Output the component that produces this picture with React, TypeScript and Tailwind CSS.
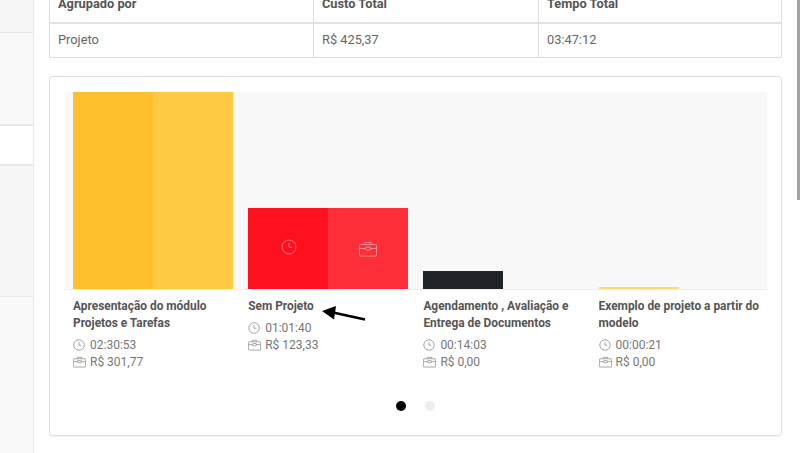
import React from 'react'

const ClockIcon = ({ className }: { className?: string }) => (
  <svg viewBox="0 0 16 16" fill="none" stroke="currentColor" strokeWidth="1" className={className}>
    <circle cx="8" cy="8" r="7" />
    <path d="M8 4v4.3h3" />
  </svg>
)

const BagIcon = ({ className }: { className?: string }) => (
  <svg viewBox="0 0 18 16" fill="none" stroke="currentColor" strokeWidth="1" className={className}>
    <rect x="0.5" y="3.5" width="17" height="11.5" rx="1" />
    <path d="M6 3.5V1.5h6v2M0.5 7.5h6M11.5 7.5h6" />
    <rect x="6.5" y="6" width="5" height="3" rx="0.5" />
  </svg>
)

const projects = [
  { title: ['Apresentação do módulo', 'Projetos e Tarefas'], time: '02:30:53', cost: 'R$ 301,77', height: 'h-[197px]', left: 'bg-[#ffc02e]', right: 'bg-[#ffca43]' },
  { title: ['Sem Projeto'], time: '01:01:40', cost: 'R$ 123,33', height: 'h-[81px]', left: 'bg-[#ff101e]', right: 'bg-[#ff2f3a]', icons: true },
  { title: ['Agendamento , Avaliação e', 'Entrega de Documentos'], time: '00:14:03', cost: 'R$ 0,00', height: 'h-[18px]', left: 'bg-[#1f2327]', right: 'bg-transparent' },
  { title: ['Exemplo de projeto a partir do', 'modelo'], time: '00:00:21', cost: 'R$ 0,00', height: 'h-[2px]', left: 'bg-[#ffd679]', right: 'bg-transparent' },
]

export default function App() {
  return (
    <div className="relative flex h-[453px] w-[800px] overflow-hidden bg-white font-['Roboto',sans-serif] text-[12px] text-[#666]">
      {/* sidebar */}
      <div className="flex h-full w-[34px] shrink-0 flex-col border-r border-[#e8e8e8]">
        <div className="h-[33px] border-b border-[#e8e8e8] bg-[#f6f6f6]" />
        <div className="h-[93px] border-b-2 border-[#e8e8e8] bg-[#f9f9f9]" />
        <div className="h-[40px] border-b-2 border-[#e8e8e8] bg-white" />
        <div className="h-[131px] border-b border-[#eaeaea] bg-[#f7f7f7]" />
        <div className="flex-1 bg-[#f9f9f9]" />
      </div>

      <div className="w-[749px] shrink-0 pl-[15px]">
        {/* summary table */}
        <div className="-mt-[11px] w-[733px] border border-t-0 border-[#ddd] text-[12.8px] text-[#666]">
          <div className="grid h-[35px] grid-cols-[263px_225px_1fr] border-b-2 border-[#e2e2e2] font-bold text-[#555]">
            <div className="px-2 pt-[5px]">Agrupado por</div>
            <div className="border-l border-[#ddd] px-2 pt-[5px]">Custo Total</div>
            <div className="border-l border-[#ddd] px-2 pt-[5px]">Tempo Total</div>
          </div>
          <div className="grid h-[33px] grid-cols-[263px_225px_1fr] items-stretch leading-[32px]">
            <div className="px-2">Projeto</div>
            <div className="border-l border-[#ddd] px-2">R$ 425,37</div>
            <div className="border-l border-[#ddd] px-2">03:47:12</div>
          </div>
        </div>

        {/* chart card */}
        <div className="mt-[18px] h-[360px] w-[733px] rounded-[3px] border border-[#e0e0e0] px-[15px] pt-[15px] shadow-[0_1px_1px_rgba(0,0,0,0.05)]">
          <div className="flex h-[198px] w-[702px] items-end gap-[15.2px] border-b border-[#eee] bg-[#f8f8f8] pl-2">
            {projects.map(p => (
              <div key={p.time} className={`flex w-[160px] ${p.height}`}>
                <div className={`flex flex-1 items-center justify-center ${p.left}`}>
                  {p.icons && <ClockIcon className="mb-1 ml-[2px] h-4 w-4 text-[#ff7a82]" />}
                </div>
                <div className={`flex flex-1 items-center justify-center ${p.right}`}>
                  {p.icons && <BagIcon className="h-4 w-[18px] text-[#ff8d94]" />}
                </div>
              </div>
            ))}
          </div>

          <div className="flex gap-[15.2px] pl-2 pt-[8px]">
            {projects.map(p => (
              <div key={p.time} className="w-[160px] text-[#777]">
                <div className="text-[11.9px] font-bold leading-[17px] whitespace-nowrap text-[#555]">
                  {p.title.map(line => <div key={line}>{line}</div>)}
                </div>
                <div className="mt-[4px] flex h-[17.5px] items-center gap-[5px]">
                  <ClockIcon className="h-3 w-3 text-[#888]" />
                  <span>{p.time}</span>
                </div>
                <div className="flex h-[17.5px] items-center gap-[4px]">
                  <BagIcon className="h-3 w-[13px] text-[#888]" />
                  <span>{p.cost}</span>
                </div>
              </div>
            ))}
          </div>

          {/* pager */}
          <div className="absolute left-[396px] top-[401px] flex gap-[19px]">
            <span className="h-[10px] w-[10px] rounded-full bg-black" />
            <span className="h-[10px] w-[10px] rounded-full bg-[#eee]" />
          </div>
        </div>
      </div>

      {/* annotation arrow */}
      <svg className="absolute left-[320px] top-[304px] h-[20px] w-[50px]" viewBox="0 0 50 20">
        <path d="M45 15.5 L13 8.5" stroke="#000" strokeWidth="2.5" />
        <path d="M2 7 L16 2 L14 15.5 Z" fill="#000" />
      </svg>

      {/* scrollbar thumb */}
      <div className="absolute right-0 top-0 h-[200px] w-[3px] bg-[#a3a3a6]" />
    </div>
  )
}
